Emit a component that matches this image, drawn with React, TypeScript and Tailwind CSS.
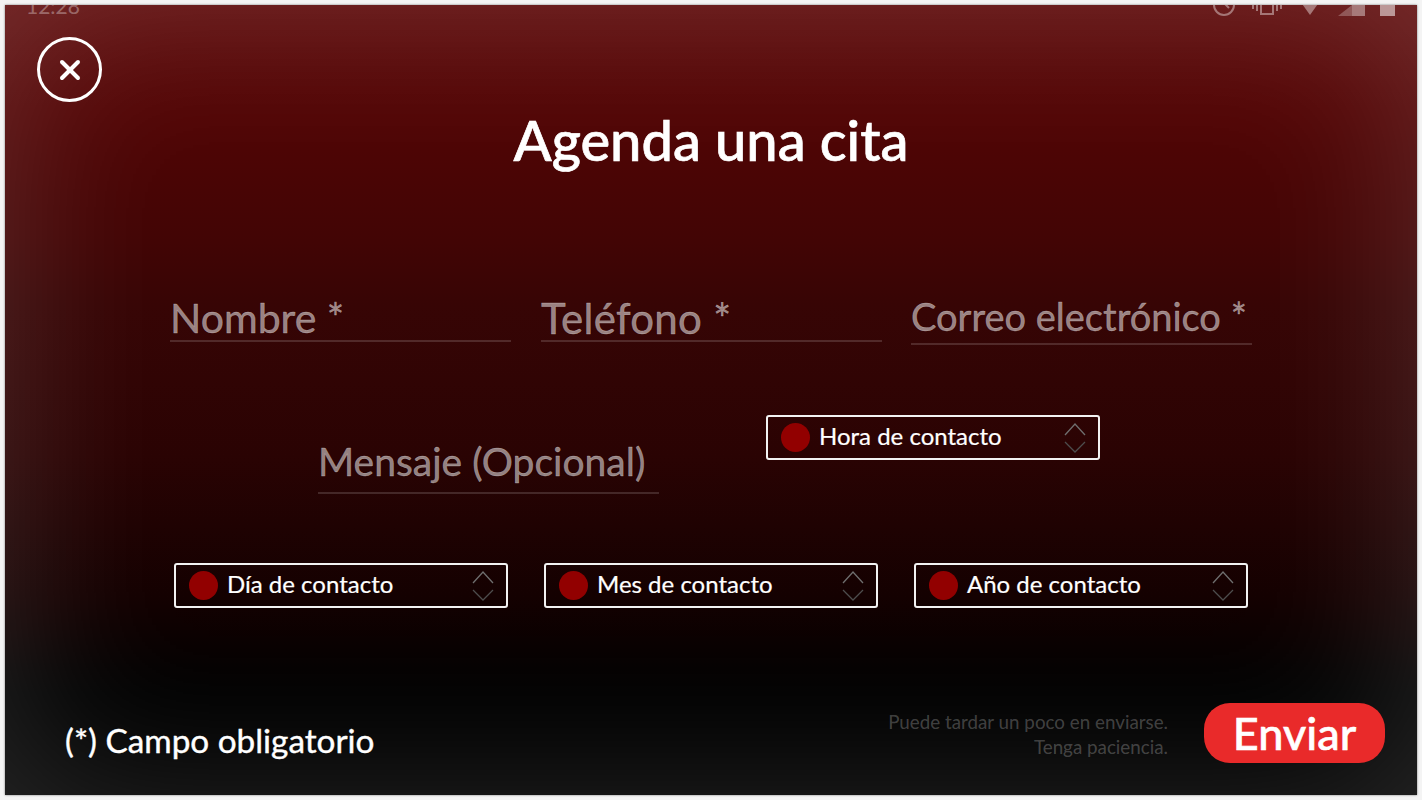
import React from "react";
import { X } from "lucide-react";

const font = { fontFamily: '"Lato", "Noto Sans", sans-serif' };

function Field({ label, className, labelClass }: { label: string; className?: string; labelClass: string }) {
  return (
    <div className={`w-[341px] h-[44px] border-b-2 border-[#ffffff26] flex items-end ${className ?? ""}`}>
      <span className={`leading-[44px] text-[#ffffff80] whitespace-nowrap [-webkit-text-stroke:0.4px_#ffffff70] ${labelClass}`}>{label}</span>
    </div>
  );
}

function Picker({ label }: { label: string }) {
  return (
    <div className="w-[334px] h-[45px] shrink-0 rounded-[3px] border-2 border-[#f2f2f2] flex items-center pl-[13px] pr-[11px]">
      <span className="w-[29px] h-[29px] rounded-full bg-[#920000] shrink-0" />
      <span className="ml-[9px] pb-[4px] text-[24px] text-white flex-1 whitespace-nowrap [-webkit-text-stroke:0.2px_white]">{label}</span>
      <svg width="24" height="30" viewBox="0 0 24 30" fill="none" strokeWidth="1.3">
        <path d="M2 12 12 1l10 11" stroke="#6f6f6f" />
        <path d="M2 19l10 10 10-10" stroke="#4d4d4d" />
      </svg>
    </div>
  );
}

function StatusIcons() {
  return (
    <svg width="186" height="20" viewBox="0 0 186 20" fill="none" stroke="#ffffff66" strokeWidth="2">
      <circle cx="11" cy="0" r="10" />
      <path d="M11 -2l5 5" />
      <path d="M48 -6h12v15H48z" />
      <path d="M40 -2v6M44 -4v10M64 -4v10M68 -2v6" />
      <path d="M87 -4h20l-10 14z" fill="#ffffff66" stroke="none" />
      <path d="M125 11l14-11v11z" fill="#ffffff40" stroke="none" />
      <path d="M139 0l13-10v21h-13z" fill="#ffffff66" stroke="none" />
      <path d="M167 -4h15v15h-15z" fill="#ffffff88" stroke="none" />
    </svg>
  );
}

export default function App() {
  return (
    <div className="w-[1422px] h-[800px] bg-[#f4f4f4] p-[5px] overflow-hidden" style={font}>
      <div className="relative w-[1412px] h-[790px] overflow-hidden bg-[linear-gradient(180deg,#5e0a0a_0%,#520505_13%,#420505_30%,#370505_38%,#2a0303_57%,#140101_75%,#040000_84%,#000000_88%,#000000_100%)] shadow-[0_0_2px_#777]">
        {/* soft light glow along all four edges */}
        <div className="absolute inset-0 pointer-events-none shadow-[inset_0_0_170px_#ffffff2a]" />
        <div className="absolute left-[21px] -top-[11px] text-[21px] leading-[24px] text-[#ffffff55]">12:28</div>
        <div className="absolute left-[1208px] top-0">
          <StatusIcons />
        </div>

        <div className="relative flex flex-col h-full">
          <div className="pl-[32px] pt-[32px]">
            <div className="w-[65px] h-[65px] rounded-full border-[3px] border-white flex items-center justify-center">
              <X size={32} strokeWidth={3} className="text-white" />
            </div>
          </div>
          <h1 className="mt-[6px] text-center text-[56px] leading-[64px] font-medium text-white [-webkit-text-stroke:0.7px_white]">Agenda una cita</h1>

          <div className="mt-[126px] pl-[165px] flex items-start gap-[30px]">
            <Field label="Nombre *" labelClass="text-[41px]" />
            <Field label="Teléfono *" labelClass="text-[42px] tracking-[0.3px]" />
            <Field label="Correo electrónico *" labelClass="text-[38px] pb-[5px]" className="mt-[3px] -ml-[1px]" />
          </div>

          <div className="mt-[70px] pl-[313px] flex items-start gap-[107px]">
            <Field label="Mensaje (Opcional)" labelClass="text-[39px] pb-[9px]" className="mt-[35px]" />
            <Picker label="Hora de contacto" />
          </div>

          <div className="pt-[69px] pl-[169px] flex gap-[36px]">
            <Picker label="Día de contacto" />
            <Picker label="Mes de contacto" />
            <Picker label="Año de contacto" />
          </div>

          <div className="mt-auto pb-[32px] pl-[60px] pr-[32px] flex items-end">
            <span className="flex-1 text-[33.3px] leading-[44px] text-white mb-[1px] whitespace-nowrap [-webkit-text-stroke:0.4px_white]">(*) Campo obligatorio</span>
            <div className="text-right text-[18.8px] leading-[25px] text-[#ffffff3d] mr-[36px] mb-[4px]">
              <p>Puede tardar un poco en enviarse.</p>
              <p>Tenga paciencia.</p>
            </div>
            <button className="w-[181px] h-[60px] rounded-[26px] bg-[#e92a2a] text-[45px] leading-none text-white font-medium [-webkit-text-stroke:0.6px_white]">Enviar</button>
          </div>
        </div>
      </div>
    </div>
  );
}
